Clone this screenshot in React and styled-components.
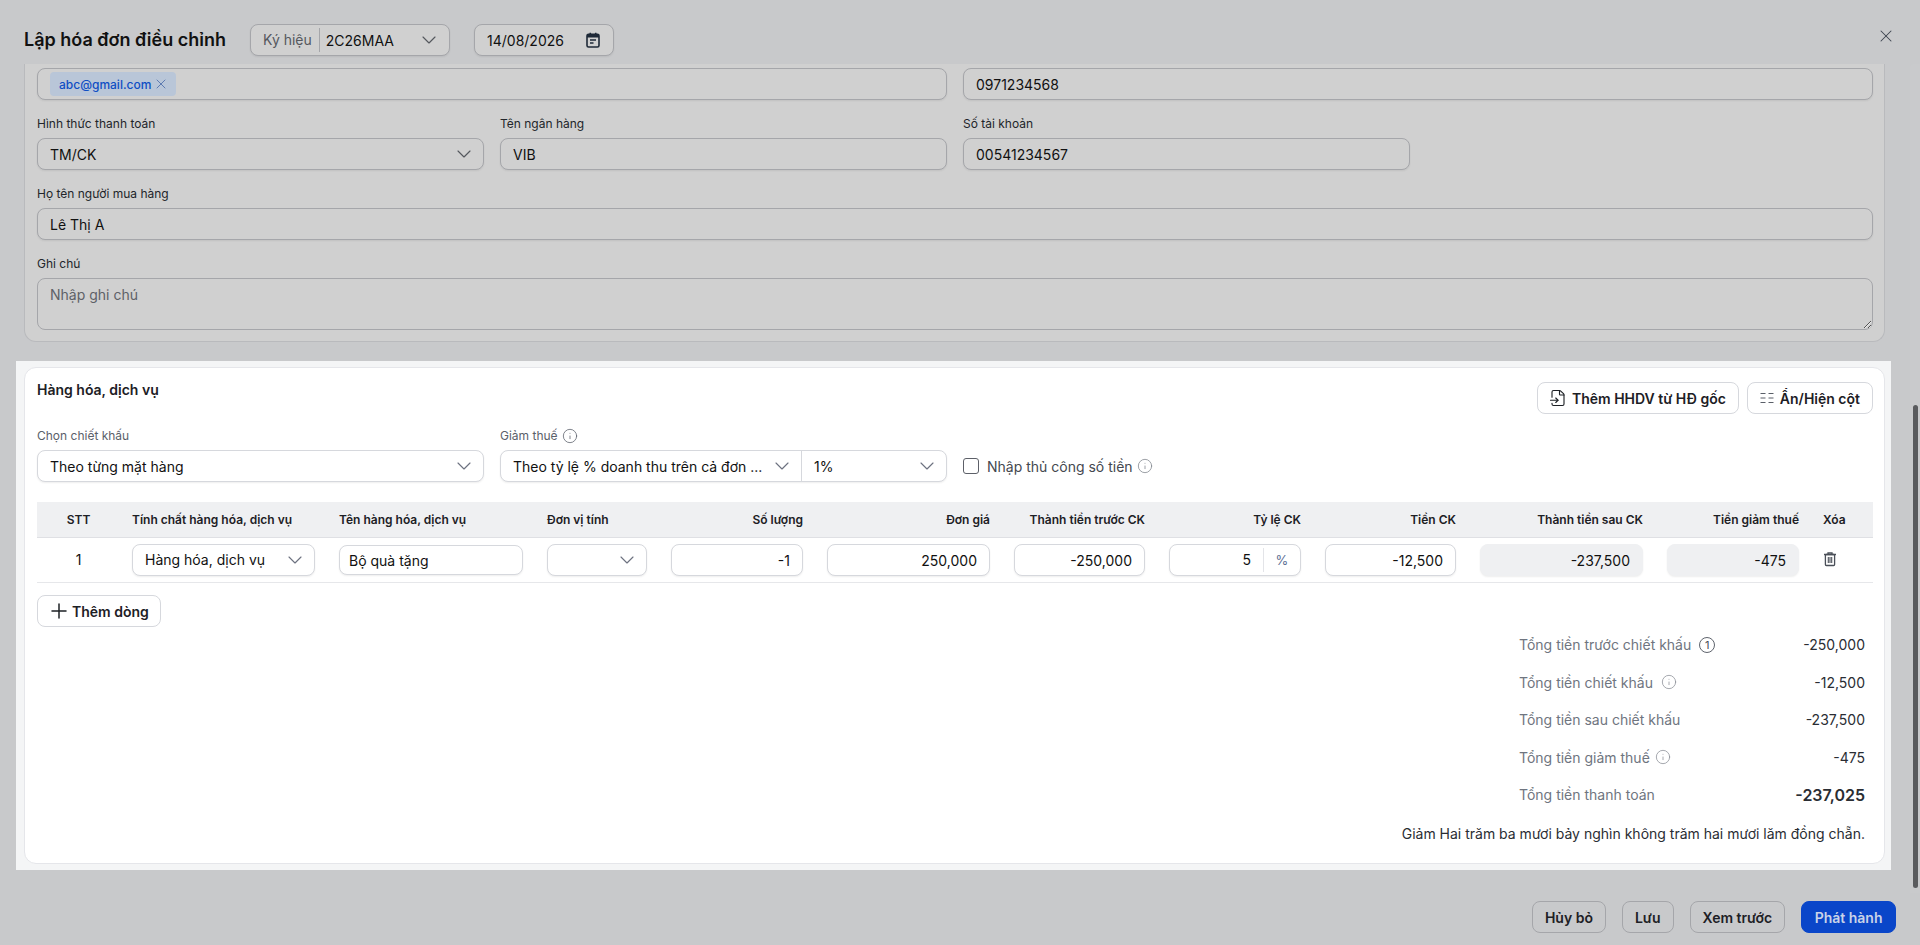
import React from 'react'
import styled, { createGlobalStyle } from 'styled-components'
import { ChevronDown, X, Plus, Info, FileInput } from 'lucide-react'

const Global = createGlobalStyle`
  html, body { margin: 0; padding: 0; height: 100%; overflow: hidden; }
  body { font-family: Inter, "Noto Sans", sans-serif; font-size: 14px; color: #111; }
  * { box-sizing: border-box; }
`

const Page = styled.div`
  height: 100vh;
  display: flex;
  flex-direction: column;
  background: #c8c9cb;
`

const Header = styled.header`
  height: 64px;
  flex: none;
  display: flex;
  align-items: center;
  padding: 16px 24px 0 24px;
`

const Title = styled.h1`
  margin: 0 24px 0 0;
  font-size: 18px;
  line-height: 28px;
  font-weight: 600;
  color: #111;
`

const CloseButton = styled.span`
  margin-left: auto;
  display: flex;
  align-self: flex-start;
  margin-top: 10px;
  color: #3d4350;
`

const Main = styled.div`
  flex: 1;
  min-height: 0;
  display: flex;
`

const Content = styled.div`
  flex: 1;
  min-width: 0;
  overflow: hidden;
`

const Track = styled.div`
  width: 10px;
  flex: none;
  padding: 341px 2px 5px 3px;
  background: #c9cacc;
  border-radius: 4px 0 0 0;
`

const Thumb = styled.div`
  height: 483px;
  border-radius: 3px;
  background: #5a5b5e;
`

const InfoCard = styled.section`
  margin: 0 25px 0 24px;
  padding: 4px 11px 11px 12px;
  height: 278px;
  background: #d0d0d0;
  border: 1px solid #b9babd;
  border-top: none;
  border-radius: 0 0 12px 12px;
  display: grid;
  grid-template-columns: repeat(4, 1fr);
  gap: 16px;
  align-content: start;
`

const Field = styled.div`
  grid-column: span ${({ $span }) => $span || 1};
  min-width: 0;
`

const Label = styled.label`
  display: flex;
  align-items: center;
  gap: 4px;
  height: 16px;
  margin-bottom: 6px;
  font-size: 12px;
  line-height: 16px;
  color: ${({ $muted }) => ($muted ? '#5a606a' : '#22252a')};
`

const Box = styled.div`
  height: 32px;
  display: flex;
  align-items: center;
  background: ${({ $dim }) => ($dim ? '#d0d0d0' : '#fff')};
  border: 1px solid ${({ $dim }) => ($dim ? '#a5a6aa' : '#d6d8dd')};
  border-radius: 8px;
  box-shadow: 0 1px 2px rgba(0, 0, 0, 0.07);
  color: #111;
  overflow: hidden;
`

const TextInput = styled.input`
  width: ${({ $w }) => ($w ? `${$w}px` : '100%')};
  height: ${({ $h }) => $h || 32}px;
  margin-top: ${({ $top }) => $top || 0}px;
  padding: 0 12px 0 ${({ $left }) => $left || 12}px;
  font: 14px Inter, sans-serif;
  color: #111;
  text-align: ${({ $right }) => ($right ? 'right' : 'left')};
  background: ${({ $dim, $grey }) => ($dim ? '#d0d0d0' : $grey ? '#eff0f2' : '#fff')};
  border: 1px solid ${({ $dim, $grey }) => ($dim ? '#a5a6aa' : $grey ? '#eff0f2' : '#d6d8dd')};
  border-radius: 8px;
  box-shadow: 0 1px 2px rgba(0, 0, 0, 0.07);
  outline: none;
`

const NoteArea = styled.textarea`
  display: block;
  width: 100%;
  height: 52px;
  padding: 6px 12px;
  font: 14px/20px Inter, sans-serif;
  background: #d0d0d0;
  border: 1px solid #a5a6aa;
  border-radius: 8px;
  outline: none;
  &::placeholder { color: #5e6167; }
`

const Chip = styled.span`
  display: inline-flex;
  align-items: center;
  gap: 2px;
  height: 24px;
  margin-left: 12px;
  padding: 0 7px 0 9px;
  font-size: 12px;
  font-weight: 500;
  color: #0f4ec4;
  background: #b9c6d8;
  border-radius: 4px;
  svg { color: #4a6ba8; }
`

const SelectBox = styled.div`
  flex: ${({ $width }) => ($width ? `0 0 ${$width}px` : 1)};
  min-width: 0;
  height: 100%;
  display: flex;
  align-items: center;
  justify-content: space-between;
  padding: 0 7px 0 12px;
  white-space: nowrap;
  & + & { border-left: 1px solid #d6d8dd; }
  svg { flex: none; color: ${({ $dim }) => ($dim ? '#55585e' : '#6d7280')}; }
`

const SymbolLabel = styled.span`
  color: #55585e;
  padding-right: 7px;
  border-right: 1px solid #a5a6aa;
  line-height: 24px;
`

const SymbolValue = styled.span`
  margin-left: 6px;
  flex: 1;
`

const HeaderSelect = styled(Box)`
  width: 200px;
  margin-right: 24px;
  padding: 0 8px 0 12px;
  svg { flex: none; color: #55585e; }
`

const DateBox = styled(Box)`
  width: 140px;
  justify-content: space-between;
  padding: 0 12px;
`

const GoodsFrame = styled.div`
  margin: 19px 19px 0 16px;
  padding: 6px 6px 6px 8px;
  background: #f4f5f6;
`

const GoodsCard = styled.section`
  height: 497px;
  padding: 14px 11px 0 12px;
  background: #fff;
  border: 1px solid #e5e6ea;
  border-radius: 12px;
`

const GoodsHeader = styled.div`
  display: flex;
  justify-content: space-between;
  align-items: flex-start;
`

const SectionTitle = styled.h2`
  margin: -2px 0 0;
  font-size: 14px;
  line-height: 20px;
  font-weight: 600;
  color: #1d2025;
`

const ActionGroup = styled.div`
  display: flex;
  gap: 8px;
`

const Button = styled.button`
  height: 32px;
  display: inline-flex;
  align-items: center;
  gap: ${({ $gap }) => $gap ?? 6}px;
  padding: 0 ${({ $padRight, $pad }) => $padRight ?? $pad ?? 12}px 0 ${({ $pad }) => $pad ?? 12}px;
  font: 600 14px Inter, sans-serif;
  color: ${({ $primary }) => ($primary ? '#c9d3e8' : '#1d2025')};
  white-space: nowrap;
  background: ${({ $primary, $dim }) => ($primary ? '#0a46c9' : $dim ? 'transparent' : '#fff')};
  border: 1px solid ${({ $primary, $dim }) => ($primary ? '#0a46c9' : $dim ? '#a5a6aa' : '#d6d8dd')};
  border-radius: 8px;
  svg { flex: none; }
`

const FilterRow = styled.div`
  margin-top: 14px;
  display: grid;
  grid-template-columns: 447px 447px 1fr;
  gap: 16px;
  align-items: end;
`

const ManualCheck = styled.label`
  display: flex;
  align-items: center;
  gap: 8px;
  height: 32px;
  color: #44484f;
  svg { color: #7f848c; margin-left: -4px; }
`

const CheckBox = styled.input`
  appearance: none;
  width: 16px;
  height: 16px;
  margin: 0;
  border: 1px solid #5d6068;
  border-radius: 3px;
  background: #fff;
`

const COLUMNS = '83px 207px 208px 124px 156px 187px 155px 156px 155px 187px 156px 62px'

const TableHead = styled.div`
  margin-top: 20px;
  height: 36px;
  display: grid;
  grid-template-columns: ${COLUMNS};
  align-items: center;
  background: #eff0f2;
  border-bottom: 1px solid #dfe0e4;
`

const TableRow = styled.div`
  height: 45px;
  padding-top: 6px;
  display: grid;
  grid-template-columns: ${COLUMNS};
  align-items: start;
  border-bottom: 1px solid #e6e7ea;
`

const HeadCell = styled.div`
  padding: 0 12px;
  font-size: 12px;
  font-weight: 600;
  color: #1d2025;
  white-space: nowrap;
  text-align: ${({ $align }) => $align || 'left'};
`

const Cell = styled.div`
  padding: 0 12px;
  min-width: 0;
  text-align: ${({ $align }) => $align || 'left'};
  line-height: ${({ $line }) => $line || 32}px;
`

const RatioValue = styled.span`
  flex: 1;
  text-align: right;
  padding-right: 12px;
  border-right: 1px solid #e3e4e8;
  line-height: 24px;
`

const RatioUnit = styled.span`
  width: 36px;
  text-align: center;
  font-size: 13px;
  color: #5c6f94;
`

const TrashSlot = styled.span`
  display: flex;
  height: 32px;
  padding-top: 7px;
  margin-left: -1px;
  color: #4a4f58;
`

const AddRow = styled(Button)`
  margin-top: 12px;
`

const Summary = styled.div`
  width: 346px;
  margin: -1px 8px 0 auto;
`

const SummaryRow = styled.div`
  height: 37.5px;
  display: flex;
  align-items: center;
  justify-content: space-between;
`

const SummaryLabel = styled.span`
  display: flex;
  align-items: center;
  gap: ${({ $gap }) => $gap}px;
  color: #6f7580;
  svg { color: #8b8f96; }
`

const SummaryValue = styled.span`
  color: #2a2d33;
  font-size: ${({ $big }) => ($big ? 16 : 14)}px;
  font-weight: ${({ $big }) => ($big ? 600 : 400)};
`

const CountBadge = styled.span`
  width: 16px;
  height: 16px;
  display: inline-flex;
  align-items: center;
  justify-content: center;
  border: 1px solid #5f646d;
  border-radius: 50%;
  font-size: 11px;
  color: #4a4f58;
`

const AmountNote = styled.p`
  margin: 10px 8px 0 0;
  text-align: right;
  line-height: 20px;
  color: #2a2d33;
`

const Footer = styled.footer`
  height: 52px;
  flex: none;
  display: flex;
  justify-content: flex-end;
  gap: 16px;
  padding: 8px 24px 0 0;
`

const Chevron = () => <ChevronDown size={24} strokeWidth={1.15} />

const CalendarIcon = () => (
  <svg width="16" height="16" viewBox="0 0 16 16">
    <rect x="2" y="2.2" width="12" height="12.8" rx="1.6" fill="none" stroke="#1e2937" strokeWidth="1.6" />
    <path d="M2 2.5h12V5.5H2zM4.5 0.8h1.6v2H4.5zM9.9 0.8h1.6v2H9.9z" fill="#1e2937" />
    <path d="M5 8h6M5 11h3.5" stroke="#1e2937" strokeWidth="1.4" />
  </svg>
)

const ColumnsIcon = () => (
  <svg width="16" height="16" viewBox="0 0 16 16" stroke="#5a5f68" strokeWidth="1">
    <path d="M1.5 3.5h5M1.5 8h5M1.5 12.5h5M9.5 3.5h5M9.5 8h5M9.5 12.5h5" />
  </svg>
)

const TrashIcon = () => (
  <svg width="16" height="16" viewBox="0 0 16 16" fill="none" stroke="currentColor" strokeWidth="1.3">
    <path d="M2 3.5h12M6 3.2V1.8h4v1.4" />
    <rect x="3.4" y="3.5" width="9.2" height="11" rx="1" />
    <path d="M6.3 6v6M8 6v6M9.7 6v6" strokeWidth="1.1" />
  </svg>
)

const headCols = [
  ['STT', 'center'],
  ['Tính chất hàng hóa, dịch vụ'],
  ['Tên hàng hóa, dịch vụ'],
  ['Đơn vị tính'],
  ['Số lượng', 'right'],
  ['Đơn giá', 'right'],
  ['Thành tiền trước CK', 'right'],
  ['Tỷ lệ CK', 'right'],
  ['Tiền CK', 'right'],
  ['Thành tiền sau CK', 'right'],
  ['Tiền giảm thuế', 'right'],
  ['Xóa'],
]

const totals = [
  { label: 'Tổng tiền trước chiết khấu', value: '-250,000', gap: 8, badge: true },
  { label: 'Tổng tiền chiết khấu', value: '-12,500', gap: 8, info: true },
  { label: 'Tổng tiền sau chiết khấu', value: '-237,500' },
  { label: 'Tổng tiền giảm thuế', value: '-475', gap: 5, info: true },
  { label: 'Tổng tiền thanh toán', value: '-237,025', big: true },
]

export default function App() {
  return (
    <Page>
      <Global />
      <Header>
        <Title>Lập hóa đơn điều chỉnh</Title>
        <HeaderSelect $dim>
          <SymbolLabel>Ký hiệu</SymbolLabel>
          <SymbolValue>2C26MAA</SymbolValue>
          <Chevron />
        </HeaderSelect>
        <DateBox $dim>
          14/08/2026
          <CalendarIcon />
        </DateBox>
        <CloseButton><X size={20} strokeWidth={1.25} /></CloseButton>
      </Header>

      <Main>
        <Content>
          <InfoCard>
            <Field $span={2}>
              <Box $dim>
                <Chip>abc@gmail.com <X size={16} strokeWidth={1.25} /></Chip>
              </Box>
            </Field>
            <Field $span={2}>
              <TextInput $dim readOnly value="0971234568" />
            </Field>
            <Field>
              <Label>Hình thức thanh toán</Label>
              <Box $dim>
                <SelectBox $dim>TM/CK <Chevron /></SelectBox>
              </Box>
            </Field>
            <Field>
              <Label>Tên ngân hàng</Label>
              <TextInput $dim readOnly value="VIB" />
            </Field>
            <Field $span={2}>
              <Label>Số tài khoản</Label>
              <TextInput $dim readOnly $w={447} value="00541234567" />
            </Field>
            <Field $span={4}>
              <Label>Họ tên người mua hàng</Label>
              <TextInput $dim readOnly value="Lê Thị A" />
            </Field>
            <Field $span={4}>
              <Label>Ghi chú</Label>
              <NoteArea placeholder="Nhập ghi chú" />
            </Field>
          </InfoCard>

          <GoodsFrame>
            <GoodsCard>
              <GoodsHeader>
                <SectionTitle>Hàng hóa, dịch vụ</SectionTitle>
                <ActionGroup>
                  <Button $pad={11} $padRight={12} $gap={5}><FileInput size={18} strokeWidth={1.5} /> Thêm HHDV từ HĐ gốc</Button>
                  <Button $pad={11} $padRight={12} $gap={5}><ColumnsIcon /> Ẩn/Hiện cột</Button>
                </ActionGroup>
              </GoodsHeader>

              <FilterRow>
                <div>
                  <Label $muted>Chọn chiết khấu</Label>
                  <Box><SelectBox>Theo từng mặt hàng <Chevron /></SelectBox></Box>
                </div>
                <div>
                  <Label $muted>Giảm thuế <Info size={16} strokeWidth={1.15} /></Label>
                  <Box>
                    <SelectBox $width={300}>Theo tỷ lệ % doanh thu trên cả đơn ... <Chevron /></SelectBox>
                    <SelectBox>1% <Chevron /></SelectBox>
                  </Box>
                </div>
                <ManualCheck>
                  <CheckBox type="checkbox" readOnly />
                  Nhập thủ công số tiền <Info size={16} strokeWidth={1.15} />
                </ManualCheck>
              </FilterRow>

              <TableHead>
                {headCols.map(([name, align]) => (
                  <HeadCell key={name} $align={align}>{name}</HeadCell>
                ))}
              </TableHead>
              <TableRow>
                <Cell $align="center">1</Cell>
                <Cell><Box><SelectBox>Hàng hóa, dịch vụ <Chevron /></SelectBox></Box></Cell>
                <Cell $line={1}><TextInput readOnly $h={30} $top={1} $left={9} value="Bộ quà tặng" /></Cell>
                <Cell><Box><SelectBox><span /> <Chevron /></SelectBox></Box></Cell>
                <Cell><TextInput readOnly $right value="-1" /></Cell>
                <Cell><TextInput readOnly $right value="250,000" /></Cell>
                <Cell><TextInput readOnly $right value="-250,000" /></Cell>
                <Cell>
                  <Box>
                    <RatioValue>5</RatioValue>
                    <RatioUnit>%</RatioUnit>
                  </Box>
                </Cell>
                <Cell><TextInput readOnly $right value="-12,500" /></Cell>
                <Cell><TextInput readOnly $right $grey value="-237,500" /></Cell>
                <Cell><TextInput readOnly $right $grey value="-475" /></Cell>
                <Cell><TrashSlot><TrashIcon /></TrashSlot></Cell>
              </TableRow>

              <AddRow $pad={9} $padRight={11} $gap={1}><Plus size={24} strokeWidth={1.5} /> Thêm dòng</AddRow>

              <Summary>
                {totals.map(row => (
                  <SummaryRow key={row.label}>
                    <SummaryLabel $gap={row.gap}>
                      {row.label}
                      {row.badge && <CountBadge>1</CountBadge>}
                      {row.info && <Info size={16} strokeWidth={1.15} />}
                    </SummaryLabel>
                    <SummaryValue $big={row.big}>{row.value}</SummaryValue>
                  </SummaryRow>
                ))}
              </Summary>
              <AmountNote>Giảm Hai trăm ba mươi bảy nghìn không trăm hai mươi lăm đồng chẵn.</AmountNote>
            </GoodsCard>
          </GoodsFrame>
        </Content>
        <Track><Thumb /></Track>
      </Main>

      <Footer>
        <Button $dim>Hủy bỏ</Button>
        <Button $dim>Lưu</Button>
        <Button $dim>Xem trước</Button>
        <Button $primary $pad={12.5}>Phát hành</Button>
      </Footer>
    </Page>
  )
}
